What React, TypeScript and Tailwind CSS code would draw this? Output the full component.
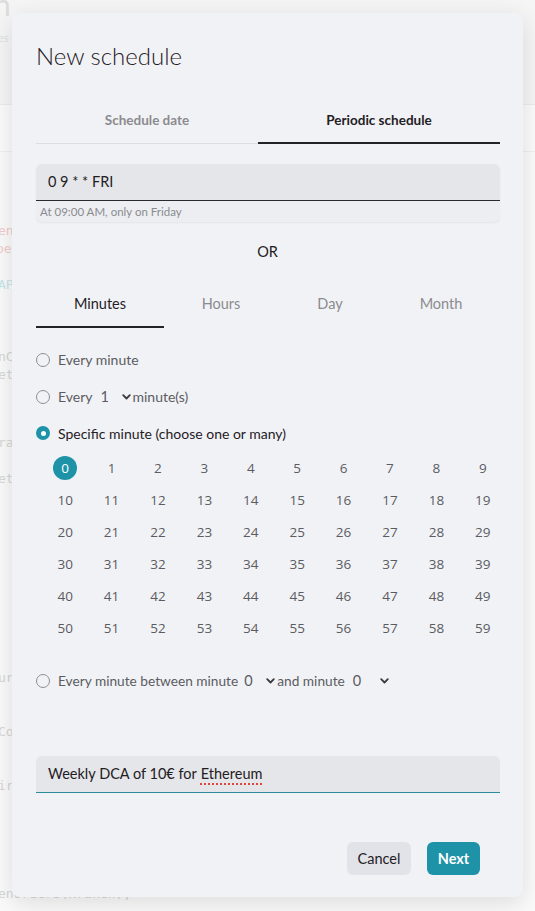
import { useState } from "react";

const Chevron = () => (
  <svg width="9" height="6" viewBox="0 0 9 6" className="inline-block">
    <path d="M1.2 1.2 L4.5 4.5 L7.8 1.2" fill="none" stroke="#3a3b40" strokeWidth="1.8" strokeLinecap="round" strokeLinejoin="round" />
  </svg>
);

const Radio = ({ checked }: { checked?: boolean }) =>
  checked ? (
    <span className="flex size-[14px] items-center justify-center rounded-full bg-[#1e93a7]">
      <span className="size-[5px] rounded-full bg-white" />
    </span>
  ) : (
    <span className="size-[14px] rounded-full border border-[#8d8e93] bg-transparent" />
  );

const App = () => {
  const [mode, setMode] = useState("specific");
  const [picked, setPicked] = useState<number[]>([0]);

  const toggle = (n: number) =>
    setPicked((p) => (p.includes(n) ? p.filter((x) => x !== n) : [...p, n]));

  return (
    <div className="relative min-h-[911px] w-full overflow-hidden bg-[#fafafa] font-['Lato',sans-serif]">
      {/* faded page behind the dialog */}
      <div className="flex flex-col text-[#d6d6d6]">
        <div className="h-[105px] border-b border-[#ececec] bg-[#f5f5f5]">
          <div className="-mt-[14px] -ml-[6px] text-[30px] leading-[36px] text-[#dcdcdc]">n</div>
          <div className="mt-[8px] -ml-[2px] text-[11px] text-[#e0e0e0]">es</div>
        </div>
        <div className="h-[47px] border-b border-[#efefef] bg-[#fbfbfb]" />
        <div className="flex flex-col font-['DejaVu_Sans_Mono',monospace] text-[13px] leading-[18px]">
          <div className="mt-[70px] -ml-[2px] text-[#f1cccc]">ent</div>
          <div className="-ml-[4px] text-[#f1cccc]">pe</div>
          <div className="mt-[18px] -ml-[2px] text-[#c5e6ea]">API</div>
          <div className="mt-[54px] -ml-[2px]">nC</div>
          <div className="-ml-[2px]">ete</div>
          <div className="mt-[50px] -ml-[2px]">ral</div>
          <div className="mt-[18px] -ml-[2px]">ete</div>
          <div className="mt-[181px] -ml-[2px]">ur</div>
          <div className="mt-[36px] -ml-[2px]">Co</div>
          <div className="mt-[36px] -ml-[2px]">ir</div>
          <div className="mt-[90px] -ml-[2px]">enOrders(Kraken);</div>
        </div>
      </div>

      {/* dialog */}
      <div className="absolute left-[12px] top-[13px] w-[511px] rounded-[8px] bg-[#f1f2f6] px-[24px] pb-[22px] pt-[27px] shadow-[0_6px_24px_rgba(0,0,0,0.12)]">
        <h1 className="text-[24px] font-light leading-[32px] text-[#1f2024]">New schedule</h1>

        <div className="mt-[25px] flex w-[464px] text-[13.5px] font-bold">
          <button className="flex h-[47px] w-[222px] items-center justify-center border-b border-[#dcdde2] pt-[1px] text-[#8b8b8e]">
            Schedule date
          </button>
          <button className="flex h-[47px] w-[242px] items-center justify-center border-b-2 border-[#222327] pt-[1px] text-[#1f2024]">
            Periodic schedule
          </button>
        </div>

        <div className="mt-[20px] w-[464px] rounded-[6px] bg-[#eceef2] shadow-[0_1px_2px_rgba(0,0,0,0.06)]">
          <div className="flex h-[37px] items-center rounded-t-[6px] border-b border-[#2a2b2f] bg-[#e5e6e9] px-[12px] text-[14.5px] text-[#1f2024]">
            0 9 * * FRI
          </div>
          <div className="flex h-[21px] items-center px-[4px] text-[11.5px] text-[#8b8b8e]">
            At 09:00 AM, only on Friday
          </div>
        </div>

        <div className="mt-[20px] text-center text-[14.5px] leading-[20px] text-[#1f2024]">OR</div>

        <div className="mt-[20px] flex w-[464px] text-[14.5px]">
          <button className="flex h-[46px] w-[128px] items-center justify-center border-b-2 border-[#222327] text-[#1f2024]">
            Minutes
          </button>
          <button className="flex h-[46px] w-[114px] items-center justify-center pb-[2px] text-[#8b8b8e]">
            Hours
          </button>
          <button className="flex h-[46px] w-[104px] items-center justify-center pb-[2px] text-[#8b8b8e]">
            Day
          </button>
          <button className="flex h-[46px] w-[118px] items-center justify-center pb-[2px] text-[#8b8b8e]">
            Month
          </button>
        </div>

        <div className="mt-[13px] flex flex-col text-[14px] text-[#5b5c61]">
          <label className="flex h-[37px] items-center gap-[8px]" onClick={() => setMode("every")}>
            <Radio checked={mode === "every"} />
            <span>Every minute</span>
          </label>
          <label className="flex h-[37px] items-center gap-[8px]" onClick={() => setMode("step")}>
            <Radio checked={mode === "step"} />
            <span>Every</span>
            <span className="-ml-[2px] flex w-[32px] items-center justify-between pl-[2px] text-[14.5px]">
              1 <Chevron />
            </span>
            <span className="-ml-[6px]">minute(s)</span>
          </label>
          <label className="flex h-[36px] items-center gap-[8px] text-[#1f2024]" onClick={() => setMode("specific")}>
            <Radio checked={mode === "specific"} />
            <span>Specific minute (choose one or many)</span>
          </label>

          <div className="ml-[6px] mt-[1px] grid w-[464px] grid-cols-10 font-['Open_Sans',sans-serif] text-[13.5px] text-[#5b5c61]">
            {Array.from({ length: 60 }, (_, n) => (
              <div key={n} className="flex h-[32px] items-center justify-center">
                <button
                  onClick={() => toggle(n)}
                  className={
                    picked.includes(n)
                      ? "flex size-[24px] items-center justify-center rounded-full bg-[#1e93a7] text-white"
                      : "flex size-[24px] items-center justify-center rounded-full"
                  }
                >
                  {n}
                </button>
              </div>
            ))}
          </div>

          <label className="mt-[19px] flex h-[36px] items-center gap-[8px]" onClick={() => setMode("range")}>
            <Radio checked={mode === "range"} />
            <span className="text-[13.7px]">Every minute between minute</span>
            <span className="-ml-[2px] flex w-[31px] items-center justify-between text-[14.5px]">
              0 <Chevron />
            </span>
            <span className="-ml-[6px] text-[13.7px]">and minute</span>
            <span className="-ml-[4px] flex w-[40px] items-center justify-between pl-[4px] text-[14.5px]">
              0 <Chevron />
            </span>
          </label>
        </div>

        <div className="mt-[57px] flex h-[37px] w-[464px] items-center rounded-t-[6px] border-b border-[#2b8d9c] bg-[#e5e6e9] px-[12px] text-[14.5px] text-[#1f2024]">
          Weekly DCA of 10€ for{" "}
          <span className="ml-[4px] underline decoration-[#e0453a] decoration-dotted decoration-2 underline-offset-[4px]">
            Ethereum
          </span>
        </div>

        <div className="mt-[49px] flex w-[464px] justify-end gap-[16px] pr-[20px]">
          <button className="h-[33px] w-[64px] rounded-[6px] bg-[#e2e3e8] text-[14.5px] text-[#1f2024]">Cancel</button>
          <button className="h-[33px] w-[53px] rounded-[6px] bg-[#1e93a7] text-[14.5px] font-bold text-white">Next</button>
        </div>
      </div>
    </div>
  );
};

export default App;
